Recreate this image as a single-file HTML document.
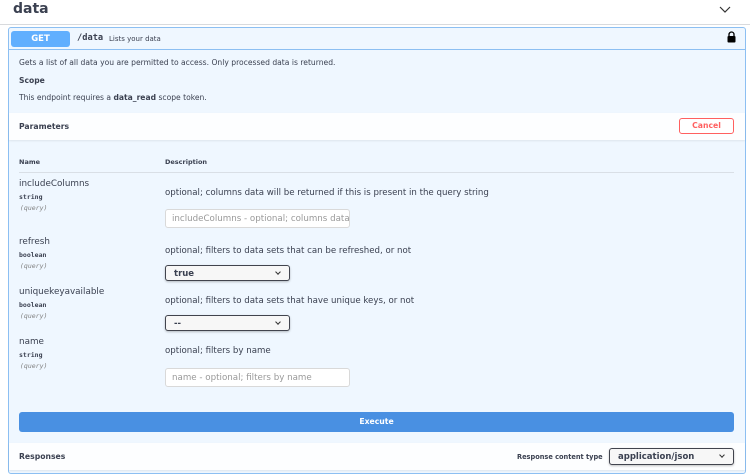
<!DOCTYPE html>
<html><head><style>
*{box-sizing:border-box;margin:0;padding:0}
body{width:750px;height:474px;background:#fff;font-family:"DejaVu Sans","Liberation Sans",sans-serif;color:#3b4151;position:relative;overflow:hidden}
.a{position:absolute}
.t{font-size:10px;white-space:nowrap}
.sel{position:absolute;border:1px solid #41444e;border-radius:3px;background:#f7f7f7;font-size:8.5px;font-weight:bold;padding:3px 8px;box-shadow:0 1px 2px rgba(0,0,0,.25)}
.sel:after{content:"";position:absolute;right:9px;top:4px;width:3px;height:3px;border-right:1.2px solid #333;border-bottom:1.2px solid #333;transform:rotate(45deg)}
.inp{position:absolute;border:1px solid #d9d9d9;border-radius:3px;background:#fff;font-size:8.7px;color:#999;padding:4px 6px;overflow:hidden;white-space:nowrap}
.pn{font-size:8.8px;color:#3b4151}
.pt{font-family:"DejaVu Sans Mono",monospace;font-size:6.5px;font-weight:bold}
.pq{font-family:"DejaVu Sans Mono",monospace;font-size:6.5px;font-style:italic;color:#808080}
.d{font-size:8.65px}
</style></head><body>
<div class="a" style="left:13px;top:1px;font-size:14px;font-weight:bold">data</div>
<svg class="a" style="left:719px;top:5px" width="12" height="9"><path d="M1 2 L6 7 L11 2" fill="none" stroke="#333" stroke-width="1.2"/></svg>
<div class="a" style="left:0;top:24px;width:750px;height:1px;background:#d8dadd"></div>
<div class="a" style="left:8px;top:27px;width:738px;height:447px;background:#eff7ff;border:1px solid #8cbff2;border-radius:3px"></div>
<div class="a" style="left:9px;top:49px;width:736px;height:1px;background:#8cbff2"></div>
<div class="a" style="left:11px;top:31px;width:59px;height:16px;background:#61affe;border-radius:3px;color:#fff;font-size:8.5px;font-weight:bold;text-align:center;line-height:16px">GET</div>
<div class="a" style="left:77px;top:33px;font-family:'DejaVu Sans Mono',monospace;font-size:8.7px;font-weight:bold">/data</div>
<div class="a t" style="left:109px;top:35px;font-size:7px">Lists your data</div>
<svg class="a" style="left:727px;top:31px" width="9" height="12"><path d="M2 5 V3.5 A2.5 2.5 0 0 1 7 3.5 V5" fill="none" stroke="#000" stroke-width="1.3"/><rect x="0.5" y="5" width="8" height="6.5" rx="1" fill="#000"/></svg>
<div class="a t" style="left:19px;top:58px;font-size:7.6px">Gets a list of all data you are permitted to access. Only processed data is returned.</div>
<div class="a t" style="left:19px;top:76px;font-size:7.6px;font-weight:bold">Scope</div>
<div class="a t" style="left:19px;top:93px;font-size:7.6px">This endpoint requires a <b>data_read</b> scope token.</div>
<div class="a" style="left:9px;top:113px;width:736px;height:27px;background:rgba(255,255,255,.85);box-shadow:0 1px 2px rgba(0,0,0,.08)"></div>
<div class="a t" style="left:19px;top:122px;font-size:7.7px;font-weight:bold">Parameters</div>
<div class="a" style="left:679px;top:118px;width:55px;height:16px;border:1.5px solid #ff6060;border-radius:3px;background:#fff;color:#ff6060;font-size:7.7px;font-weight:bold;text-align:center;line-height:13px">Cancel</div>
<div class="a t" style="left:19px;top:158px;font-size:6.5px;font-weight:bold">Name</div>
<div class="a t" style="left:165px;top:158px;font-size:6.5px;font-weight:bold">Description</div>
<div class="a" style="left:19px;top:172px;width:715px;height:1px;background:#d9dfe6"></div>

<div class="a pn" style="left:19px;top:179px">includeColumns</div>
<div class="a pt" style="left:19px;top:193px">string</div>
<div class="a pq" style="left:20px;top:204px">(query)</div>
<div class="a t d" style="left:165px;top:188px">optional; columns data will be returned if this is present in the query string</div>
<div class="inp" style="left:165px;top:209px;width:185px;height:19px">includeColumns - optional; columns data</div>

<div class="a pn" style="left:19px;top:237px">refresh</div>
<div class="a pt" style="left:19px;top:251px">boolean</div>
<div class="a pq" style="left:20px;top:262px">(query)</div>
<div class="a t d" style="left:165px;top:246px">optional; filters to data sets that can be refreshed, or not</div>
<div class="sel" style="left:165px;top:265px;width:125px;height:16px">true</div>

<div class="a pn" style="left:19px;top:287px">uniquekeyavailable</div>
<div class="a pt" style="left:19px;top:301px">boolean</div>
<div class="a pq" style="left:20px;top:312px">(query)</div>
<div class="a t d" style="left:165px;top:296px">optional; filters to data sets that have unique keys, or not</div>
<div class="sel" style="left:165px;top:315px;width:125px;height:16px">--</div>

<div class="a pn" style="left:19px;top:337px">name</div>
<div class="a pt" style="left:19px;top:351px">string</div>
<div class="a pq" style="left:20px;top:362px">(query)</div>
<div class="a t d" style="left:165px;top:346px">optional; filters by name</div>
<div class="inp" style="left:165px;top:368px;width:185px;height:19px">name - optional; filters by name</div>

<div class="a" style="left:19px;top:412px;width:715px;height:20px;background:#4990e2;border-radius:3px;color:#fff;font-size:7.7px;font-weight:bold;text-align:center;line-height:20px">Execute</div>
<div class="a" style="left:9px;top:443px;width:736px;height:27px;background:rgba(255,255,255,.85);box-shadow:0 1px 2px rgba(0,0,0,.08)"></div>
<div class="a t" style="left:19px;top:452px;font-size:7.7px;font-weight:bold">Responses</div>
<div class="a t" style="left:517px;top:453px;font-size:6.6px;font-weight:bold">Response content type</div>
<div class="sel" style="left:609px;top:448px;width:125px;height:17px">application/json</div>
</body></html>
